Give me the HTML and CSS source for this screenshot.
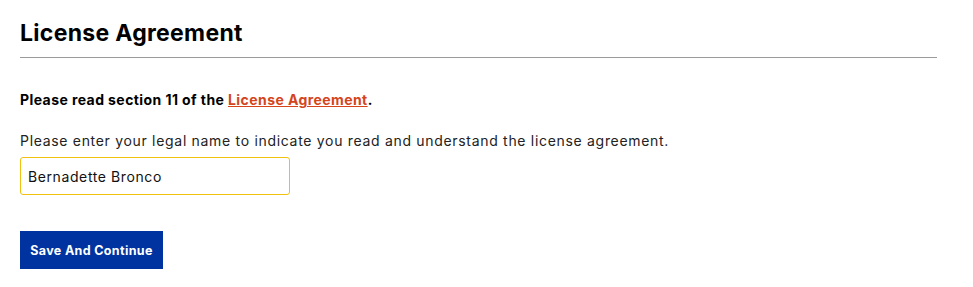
FILE: index.html
```html
<!DOCTYPE html>
<html lang="en">
<head>
<meta charset="utf-8">
<title>License Agreement</title>
<link rel="stylesheet" href="styles.css">
</head>
<body>
<main class="page">
  <h1 class="title">License Agreement</h1>
  <hr class="rule">
  <p class="notice">Please read section 11 of the <a class="link" href="#">License Agreement</a>.</p>
  <form class="form">
    <label class="label" for="legal-name">Please enter your legal name to indicate you read and understand the license agreement.</label>
    <input class="field" id="legal-name" type="text" value="Bernadette Bronco">
    <button class="btn" type="button">Save And Continue</button>
  </form>
</main>
</body>
</html>
```

FILE: styles.css
```css
html, body {
  margin: 0;
  padding: 0;
  background: #ffffff;
}
body {
  font-family: Inter, "Noto Sans", sans-serif;
  color: #111111;
}
.page {
  padding: 17px 36px 0 20px;
}
.title {
  margin: 0;
  font-size: 23px;
  line-height: 32px;
  font-weight: 700;
  letter-spacing: 0.3px;
  color: #000000;
}
.rule {
  margin: 8px 0 0 0;
  border: 0;
  border-top: 1px solid #9a9a9a;
  height: 0;
}
.notice {
  margin: 32px 0 0 0;
  font-size: 14px;
  line-height: 20px;
  font-weight: 700;
  letter-spacing: 0.42px;
  color: #000000;
}
.link {
  color: #d4451b;
  text-decoration: underline;
}
.form {
  display: flex;
  flex-direction: column;
  align-items: flex-start;
  margin-top: 21px;
}
.label {
  font-size: 14px;
  line-height: 20px;
  letter-spacing: 0.69px;
  color: #222222;
}
.field {
  box-sizing: border-box;
  margin-top: 6px;
  width: 270px;
  height: 38px;
  padding: 0 7px;
  border: 1px solid #f0c20f;
  border-radius: 3px;
  font-family: inherit;
  font-size: 14px;
  letter-spacing: 0.6px;
  color: #111111;
  outline: none;
}
.btn {
  margin-top: 36px;
  width: 143px;
  height: 38px;
  border: 0;
  border-radius: 0;
  background: #0033a0;
  color: #ffffff;
  font-family: inherit;
  font-size: 12.5px;
  font-weight: 700;
  letter-spacing: 0.35px;
  cursor: pointer;
}
```
